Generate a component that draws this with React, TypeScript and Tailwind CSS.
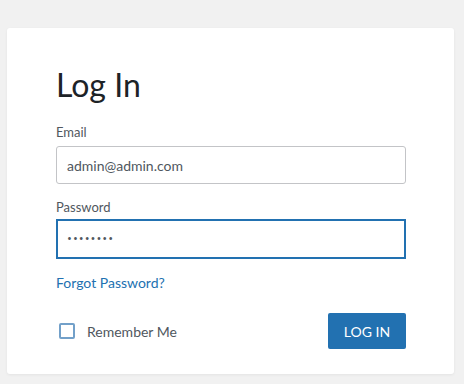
import React from "react";

export default function App() {
  return (
    <div
      className="w-[464px] h-[384px] bg-[#f1f1f1] pt-[28px] pl-[7px] overflow-hidden"
      style={{ fontFamily: 'Lato, "Open Sans", sans-serif' }}
    >
      <div className="w-[447px] h-[346px] bg-white rounded-[3px] shadow-[0_1px_3px_rgba(0,0,0,0.06)] pl-[49px] pr-[48px] pt-[37px]">
        <h1 className="text-[32px] leading-[40px] text-[#1d2327] font-normal">Log In</h1>
        <div className="mt-[18px] text-[13px] leading-[18px] text-[#50575e]">Email</div>
        <div className="mt-[5px] h-[38px] w-[350px] border border-[#c3c4c7] rounded-[3px] flex items-center pl-[10px] text-[14px] text-[#50575e]">
          admin@admin.com
        </div>
        <div className="mt-[14px] text-[13px] leading-[18px] text-[#50575e]">Password</div>
        <div
          className="mt-[3px] h-[40px] w-[350px] border-2 border-[#2271b1] flex items-center pl-[9px] text-[13px] text-[#50575e] tracking-[1px]"
          style={{ fontFamily: '"Open Sans", sans-serif' }}
        >
          ••••••••
        </div>
        <div className="mt-[14px] text-[14px] leading-[20px] text-[#2271b1]">Forgot Password?</div>
        <div className="mt-[20px] flex items-center justify-between w-[350px]">
          <div className="flex items-center pl-[3px]">
            <div className="w-[16px] h-[16px] border-2 border-[#72a0c9] rounded-[2px]"></div>
            <span className="ml-[12px] text-[14px] text-[#50575e]">Remember Me</span>
          </div>
          <button className="w-[78px] h-[36px] bg-[#2271b1] text-white text-[14px] rounded-[2px]">LOG IN</button>
        </div>
      </div>
    </div>
  );
}
